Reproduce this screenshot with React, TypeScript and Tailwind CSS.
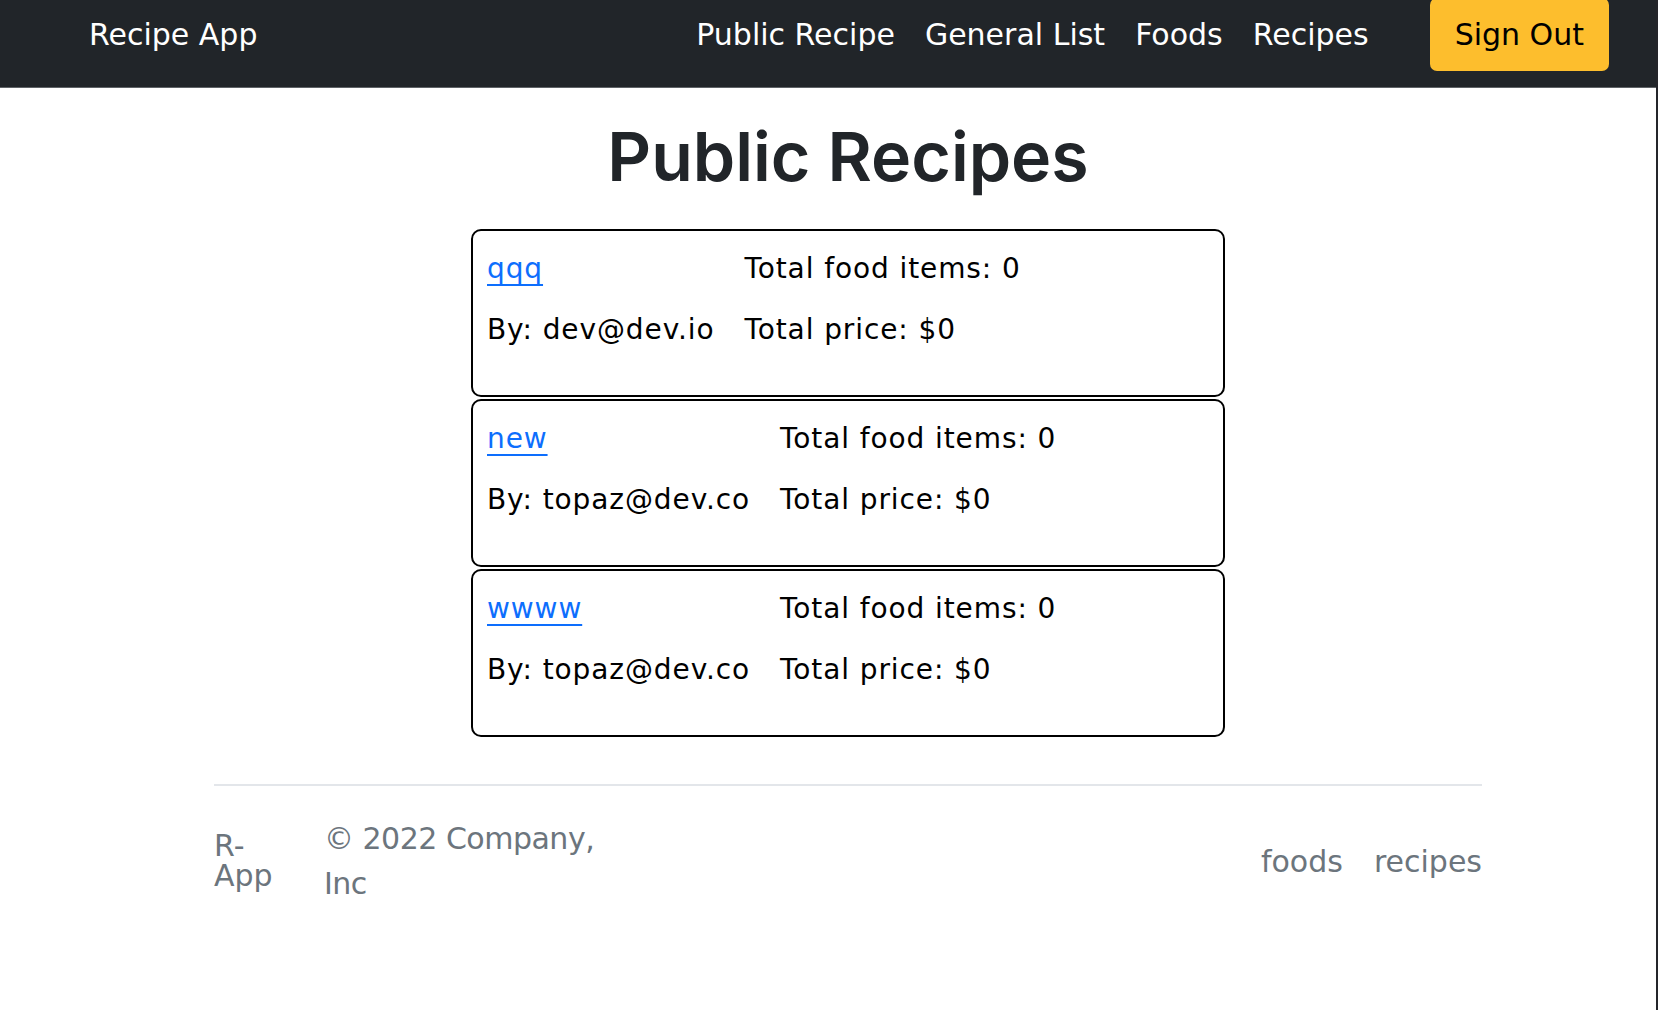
import React from 'react';

// ─── Data ────────────────────────────────────────────────────────────────────

type Recipe = {
  id: number;
  name: string;
  author: string;
  foodItems: number;
  price: number;
};

const RECIPES: Recipe[] = [
  { id: 1, name: 'qqq', author: 'dev@dev.io', foodItems: 0, price: 0 },
  { id: 2, name: 'new', author: 'topaz@dev.co', foodItems: 0, price: 0 },
  { id: 3, name: 'wwww', author: 'topaz@dev.co', foodItems: 0, price: 0 },
];

const NAV_LINKS = ['Public Recipe', 'General List', 'Foods', 'Recipes'];

const BODY_FONT = "font-['DejaVu_Sans','Noto_Sans',sans-serif]";

// ─── Navbar ──────────────────────────────────────────────────────────────────

function Navbar() {
  return (
    <nav className="flex h-[88px] items-start border-b border-[#5f6367] bg-[#212529] text-[30px] leading-[36px] text-white">
      <a href="#" className="ml-[89px] pt-[17px]">
        Recipe App
      </a>
      <ul className="ml-auto flex gap-[30px] pt-[17px]">
        {NAV_LINKS.map((link) => (
          <li key={link}>
            <a href="#">{link}</a>
          </li>
        ))}
      </ul>
      <button
        type="button"
        className="-mt-[2px] mr-[47px] ml-[61px] flex h-[73px] items-start rounded-[7px] bg-[#fdbe2d] px-[25px] pt-[19px] text-black"
      >
        Sign Out
      </button>
    </nav>
  );
}

// ─── Recipe card ─────────────────────────────────────────────────────────────

function RecipeCard({ recipe }: { recipe: Recipe }) {
  return (
    <div className="flex h-[168px] w-[754px] gap-[30px] rounded-[10px] border-2 border-black pt-[17px] pl-[14px] text-[28px] leading-[42px] tracking-[0.9px] text-black">
      <div className="flex flex-col gap-[19px]">
        <a
          href="#"
          className="text-[#0d6efd] underline decoration-2 underline-offset-[6px]"
        >
          {recipe.name}
        </a>
        <p className="whitespace-nowrap">By: {recipe.author}</p>
      </div>
      <div className="flex flex-col gap-[19px]">
        <p>Total food items: {recipe.foodItems}</p>
        <p>Total price: ${recipe.price}</p>
      </div>
    </div>
  );
}

// ─── Footer ──────────────────────────────────────────────────────────────────

function Footer() {
  return (
    <footer className="mt-[47px] w-[1268px] border-t-2 border-[#e3e6ea] pt-[30px] text-[30px] text-[#6c757d]">
      <div className="flex items-center">
        <a href="#" className="w-[64px] leading-[30px]">
          R-App
        </a>
        <p className="ml-[46px] w-[290px] leading-[45px] tracking-[-0.5px]">
          &copy; 2022 Company, Inc
        </p>
        <ul className="ml-auto flex gap-[31px] leading-[45px]">
          <li>
            <a href="#">foods</a>
          </li>
          <li>
            <a href="#">recipes</a>
          </li>
        </ul>
      </div>
    </footer>
  );
}

// ─── Page ────────────────────────────────────────────────────────────────────

export default function App() {
  return (
    <div className={`min-h-screen border-r-2 border-[#24252a] bg-white ${BODY_FONT}`}>
      <Navbar />
      <main className="flex flex-col items-center pl-[40px] pb-[60px]">
        <h1 className="mt-[28px] font-['Inter',sans-serif] text-[68px] leading-[80px] font-semibold text-[#212529]">
          Public Recipes
        </h1>
        <div className="mt-[33px] flex flex-col gap-[2px]">
          {RECIPES.map((r) => (
            <RecipeCard key={r.id} recipe={r} />
          ))}
        </div>
        <Footer />
      </main>
    </div>
  );
}
